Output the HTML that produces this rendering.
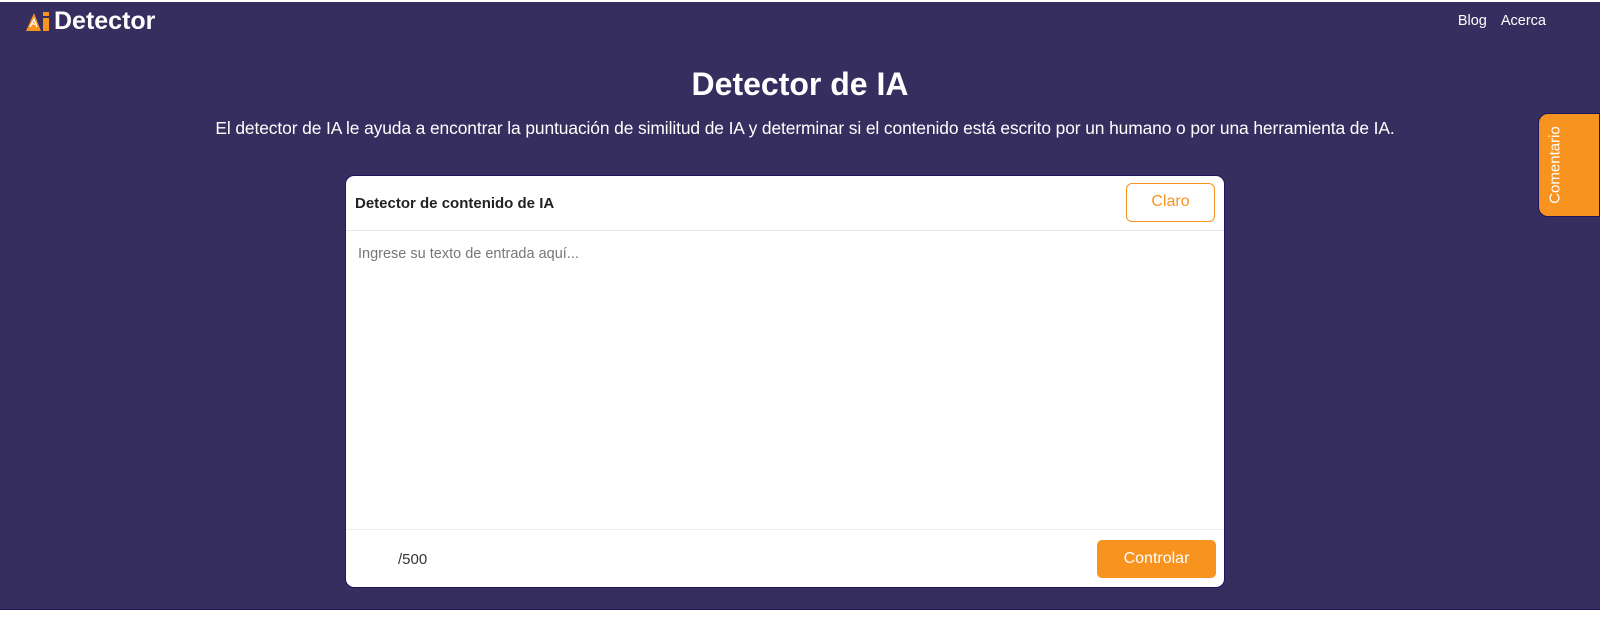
<!DOCTYPE html>
<html><head><meta charset="utf-8"><style>
*{margin:0;padding:0;box-sizing:border-box}
html,body{width:1600px;height:625px;overflow:hidden}
body{background:#fff;font-family:"Liberation Sans",sans-serif;position:relative}
.bg{position:absolute;left:0;top:2px;width:1600px;height:608px;background:#352e5f;border-bottom:1px solid #1a1660}
.logo{position:absolute;left:24px;top:7px;color:#fff;font-weight:bold;font-size:25px;display:flex;align-items:center}
.nav{position:absolute;top:13px;right:54px;color:#fff;font-size:14.5px}
.nav span{margin-left:14px}
h1{position:absolute;top:66px;width:100%;text-align:center;color:#fff;font-size:32px;font-weight:bold}
.sub{position:absolute;top:118px;width:100%;text-align:center;color:#fff;font-size:17.4px;padding-left:10px;letter-spacing:-0.1px}
.card{position:absolute;left:345px;top:175px;width:880px;height:413px;background:#fff;border-radius:9px;border:1px solid #1a1660}
.hd{height:55px;border-bottom:1px solid #e8e8ea;position:relative}
.hd b{position:absolute;left:9px;top:19px;font-size:15px;color:#222}
.claro{position:absolute;right:9px;top:7px;width:89px;height:39px;border:1.5px solid #f7931e;border-radius:6px;color:#f7931e;font-size:16px;text-align:center;line-height:36px}
.ph{position:absolute;left:12px;top:70px;color:#777;font-size:14.5px}
.ft{position:absolute;left:0;top:353px;width:100%;border-top:1px solid #eee;height:60px}
.cnt{position:absolute;left:52px;top:21px;font-size:15px;color:#333}
.ctl{position:absolute;right:8px;top:10px;width:119px;height:38px;background:#f7931e;border-radius:5px;color:#fff;font-size:16px;text-align:center;line-height:38px}
.tab{position:absolute;left:1538px;top:113px;width:62px;height:104px;background:#f7931e;border-radius:10px 0 0 10px;border:1px solid #1a1660}
.tab span{position:absolute;left:16px;top:50%;transform:translate(-50%,-50%) rotate(-90deg);color:#fff;font-size:15px;white-space:nowrap}
</style></head><body>
<div class="bg"></div>
<div class="logo"><svg width="30" height="22" viewBox="0 0 28 22"><polygon points="1,20 9,2 16,20" fill="#f7931e"/><path d="M5,16 L9,8 L12,16 M7,13 h4" stroke="#fff" stroke-width="1.3" fill="none"/><rect x="18" y="7" width="6" height="13" fill="#f7931e"/><rect x="18" y="1" width="6" height="4" fill="#f7931e"/></svg>Detector</div>
<div class="nav"><span>Blog</span><span>Acerca</span></div>
<h1>Detector de IA</h1>
<div class="sub">El detector de IA le ayuda a encontrar la puntuación de similitud de IA y determinar si el contenido está escrito por un humano o por una herramienta de IA.</div>
<div class="card">
<div class="hd"><b>Detector de contenido de IA</b><div class="claro">Claro</div></div>
<div class="ph">Ingrese su texto de entrada aquí...</div>
<div class="ft"><div class="cnt">/500</div><div class="ctl">Controlar</div></div>
</div>
<div class="tab"><span>Comentario</span></div>
</body></html>
